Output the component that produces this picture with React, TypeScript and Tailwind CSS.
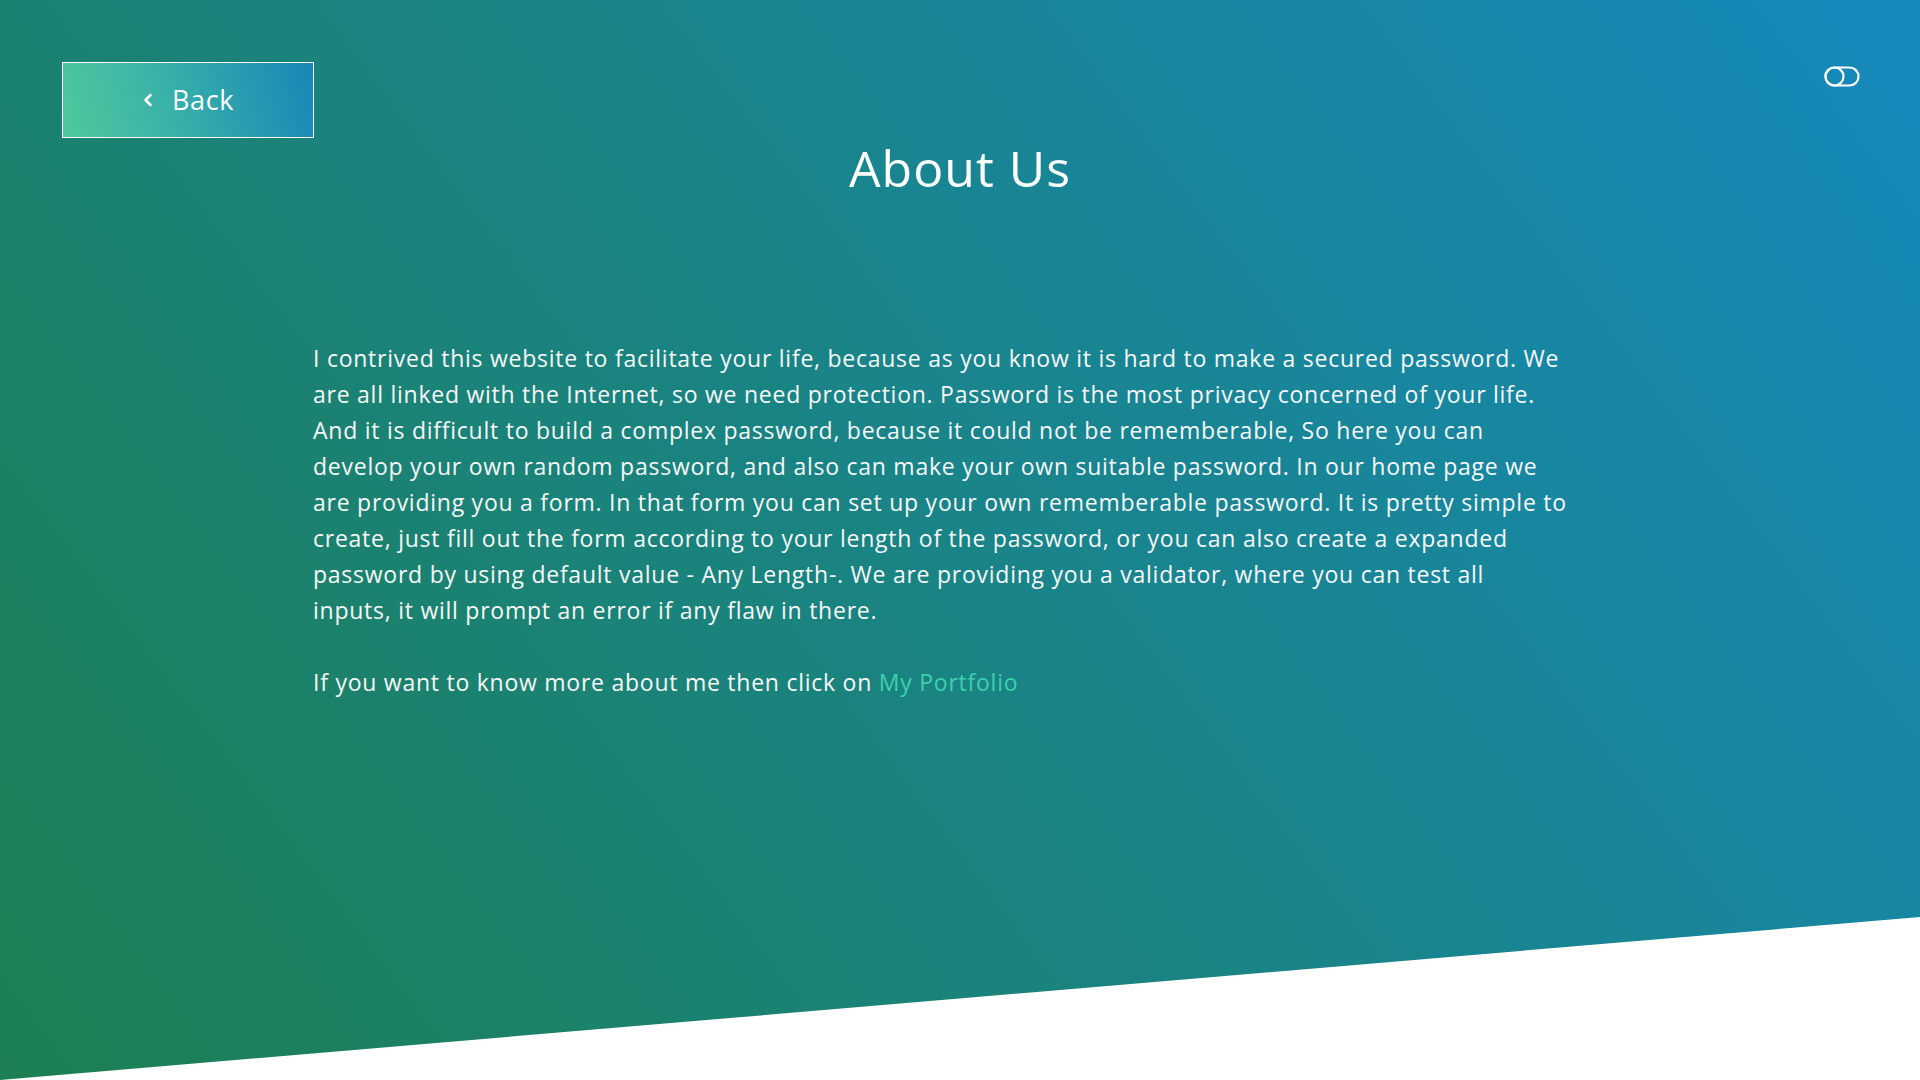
import React from "react";
import { ChevronLeft } from "lucide-react";

const LINES = [
  "I contrived this website to facilitate your life, because as you know it is hard to make a secured password. We",
  "are all linked with the Internet, so we need protection. Password is the most privacy concerned of your life.",
  "And it is difficult to build a complex password, because it could not be rememberable, So here you can",
  "develop your own random password, and also can make your own suitable password. In our home page we",
  "are providing you a form. In that form you can set up your own rememberable password. It is pretty simple to",
  "create, just fill out the form according to your length of the password, or you can also create a expanded",
  "password by using default value - Any Length-. We are providing you a validator, where you can test all",
  "inputs, it will prompt an error if any flaw in there.",
];

const ToggleIcon = () => (
  <svg width="36" height="21" viewBox="0 0 36 21" fill="none" stroke="white" strokeWidth="2.2">
    <rect x="1.5" y="1.5" width="33" height="18" rx="9" />
    <circle cx="10.5" cy="10.5" r="9" />
  </svg>
);

export default function App() {
  return (
    <div className="relative h-screen w-full overflow-hidden bg-[linear-gradient(53deg,#1d7f52,#1689bd)] font-['Open_Sans',sans-serif] text-[#f7f7f7]">
      <div className="flex items-start justify-between px-[62px] pt-[62px]">
        <button className="flex h-[76px] w-[252px] items-center justify-center gap-[14px] border-[1.5px] border-white bg-[linear-gradient(75deg,#4fc99c,#3ab3a8_40%,#1787b8)] pr-[4px] text-[27px] tracking-[0.6px] text-white">
          <ChevronLeft size={20} strokeWidth={3} />
          <span>Back</span>
        </button>
        <div className="mt-[4px] mr-[-2px]">
          <ToggleIcon />
        </div>
      </div>

      <h1 className="text-center text-[50px] leading-[60px] font-medium tracking-[1px] text-white">About Us</h1>

      <div className="mx-auto mt-[142px] w-[1294px] text-[23px] leading-[36px] tracking-[0.75px]">
        <p>
          {LINES.map((l, i) => (
            <React.Fragment key={i}>
              {l}
              {i < LINES.length - 1 && <br />}
            </React.Fragment>
          ))}
        </p>
        <p className="mt-[36px]">
          If you want to know more about me then click on{" "}
          <a href="#" className="text-[#3dd0ae]">
            My Portfolio
          </a>
        </p>
      </div>

      <div className="absolute inset-x-0 bottom-0 h-[163px] bg-white [clip-path:polygon(0_100%,100%_0,100%_100%)]" />
    </div>
  );
}
